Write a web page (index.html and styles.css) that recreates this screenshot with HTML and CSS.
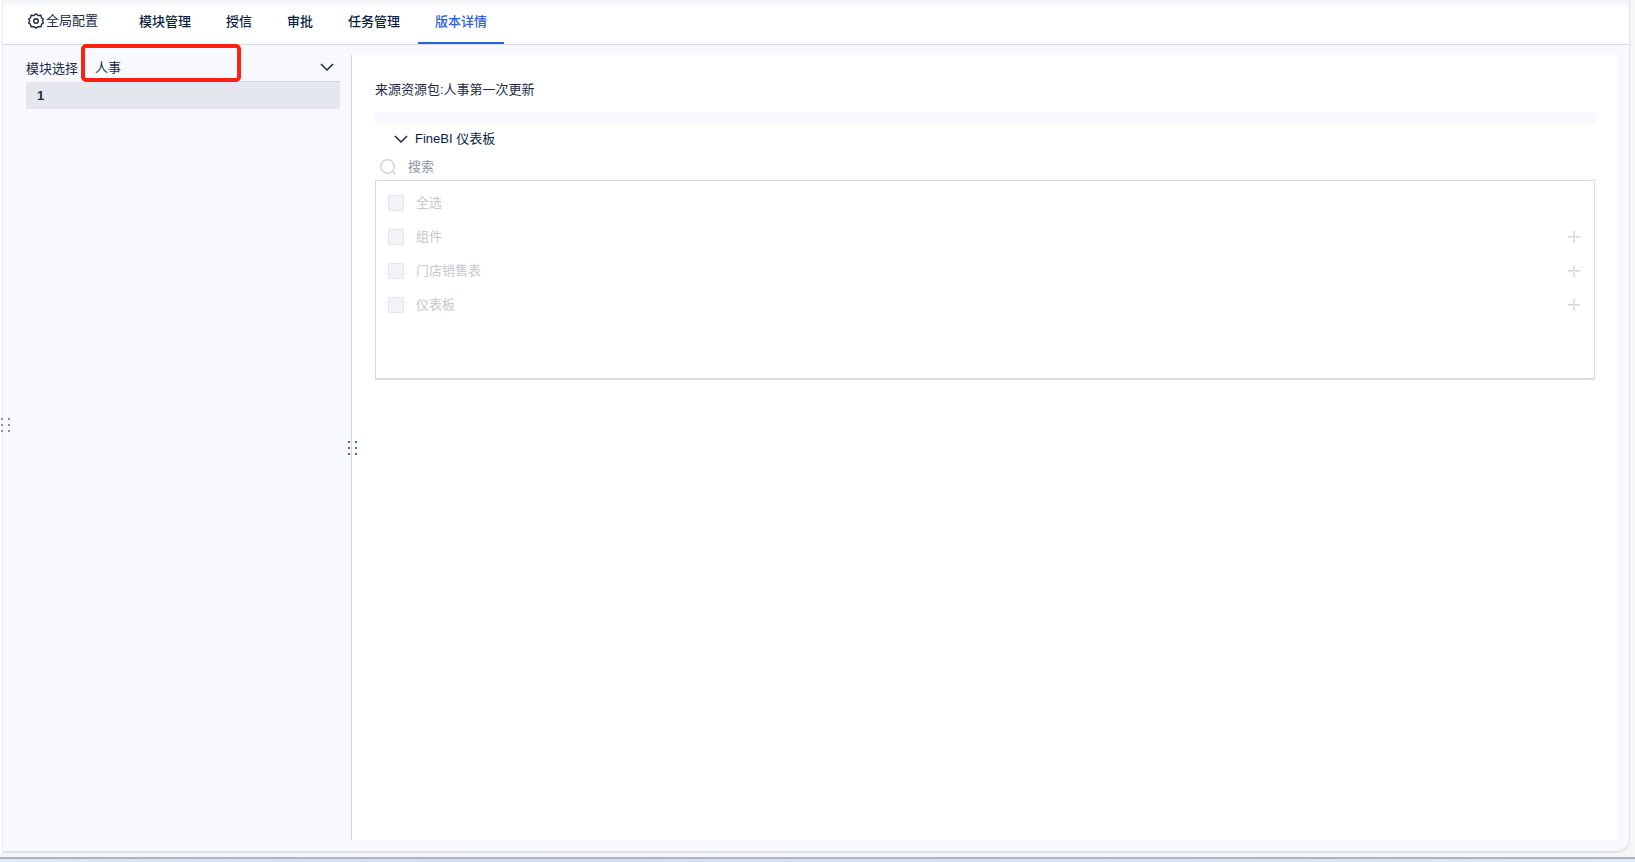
FILE: index.html
```html
<!DOCTYPE html>
<html lang="zh-CN">
<head>
<meta charset="utf-8">
<meta name="viewport" content="width=device-width, initial-scale=1">
<title>版本详情</title>
<link rel="stylesheet" href="styles.css">
</head>
<body>
<div class="window">
  <header class="topbar">
    <button class="config" type="button">
      <svg class="gear" viewBox="0 0 16 16" aria-hidden="true"><path d="M6 2.600L8 .8l2 1.800 2.900-.3.700 2.700 1.800 1-1 2 1 2-1.800 1.200-.7 2.600-2.900-.2L8 15.300l-2-1.700-2.900.2-.7-2.600L.6 10l1-2-1-2 1.800-1 .7-2.700z"/><circle cx="8" cy="8" r="2.300"/></svg>
      <span>全局配置</span>
    </button>
    <nav class="tabs" role="tablist">
      <button class="tab" type="button" role="tab">模块管理</button>
      <button class="tab" type="button" role="tab">授信</button>
      <button class="tab" type="button" role="tab">审批</button>
      <button class="tab" type="button" role="tab">任务管理</button>
      <button class="tab tab-active" type="button" role="tab" aria-selected="true">版本详情</button>
    </nav>
  </header>

  <div class="body">
    <aside class="side">
      <div class="picker">
        <label for="module">模块选择</label>
        <div class="select-wrap">
          <select id="module" class="select"><option>人事</option></select>
          <svg class="chevron select-arrow" viewBox="0 0 14 8" aria-hidden="true"><path d="M1 1l6 6 6-6"/></svg>
          <span class="highlight"></span>
        </div>
      </div>
      <ul class="versions"><li class="version">1</li></ul>
    </aside>

    <main class="detail">
      <span class="grip grip-inner" aria-hidden="true"><i></i><i></i><i></i><i></i><i></i><i></i></span>
      <p class="source">来源资源包:人事第一次更新</p>
      <div class="band"></div>
      <button class="section" type="button" aria-expanded="true">
        <svg class="chevron" viewBox="0 0 14 8" aria-hidden="true"><path d="M1 1l6 6 6-6"/></svg>
        <span>FineBI 仪表板</span>
      </button>
      <div class="search">
        <svg class="lens" viewBox="0 0 16 16" aria-hidden="true"><circle cx="7.500" cy="7.500" r="6.700"/><path d="M12.300 12.300l3.200 3.200"/></svg>
        <input class="search-input" type="text" placeholder="搜索" aria-label="搜索">
      </div>
      <div class="list">
        <div class="row"><label class="item"><input class="check" type="checkbox" disabled>全选</label></div>
        <div class="row"><label class="item"><input class="check" type="checkbox" disabled>组件</label><button class="add" type="button" disabled aria-label="展开组件"></button></div>
        <div class="row"><label class="item"><input class="check" type="checkbox" disabled>门店销售表</label><button class="add" type="button" disabled aria-label="展开门店销售表"></button></div>
        <div class="row"><label class="item"><input class="check" type="checkbox" disabled>仪表板</label><button class="add" type="button" disabled aria-label="展开仪表板"></button></div>
      </div>
    </main>
  </div>
  <span class="grip grip-outer" aria-hidden="true"><i></i><i></i><i></i><i></i><i></i><i></i></span>
</div>
<div class="taskbar"></div>
</body>
</html>
```

FILE: styles.css
```css
* {
  box-sizing: border-box;
}

body {
  margin: 0;
  height: 100vh;
  display: flex;
  flex-direction: column;
  overflow: hidden;
  background: #f6f6f6;
  color: #1a2b43;
  font: 13px/20px "Liberation Sans", "Noto Sans CJK SC", sans-serif;
}

button,
input,
select {
  margin: 0;
  padding: 0;
  border: 0;
  background: none;
  color: inherit;
  font: inherit;
}

.window {
  position: relative;
  flex: 1;
  min-height: 0;
  display: flex;
  flex-direction: column;
  margin: 0 5px 4px 2px;
  border: 1px solid #e8eaef;
  border-top: 0;
  border-right-color: #dfe2e6;
  border-bottom: 2px solid #e0e1e3;
  border-bottom-right-radius: 14px;
  background: #f7f9fe;
  box-shadow: -3px 0 0 #fff;
}

.topbar {
  display: flex;
  height: 45px;
  padding-left: 25px;
  border-bottom: 1px solid #d8dbe5;
  background: linear-gradient(#f1f2f4, #fff 9px);
}

.config {
  display: flex;
  align-items: center;
  gap: 2px;
  padding-bottom: 2px;
}

.gear {
  width: 16px;
  height: 16px;
  fill: none;
  stroke: #1a2b43;
  stroke-width: 1.4;
  stroke-linejoin: round;
}

.tabs {
  display: flex;
  gap: 1px;
  margin-left: 24px;
}

.tab {
  padding: 1px 17px 0;
  border-bottom: 2px solid transparent;
  color: #091e40;
  font-weight: 500;
}

.tab-active {
  border-bottom-color: #2c60db;
  color: #2c60db;
}

.body {
  flex: 1;
  min-height: 0;
  display: flex;
  padding: 10px 11px 11px 0;
}

.side {
  width: 348px;
  padding: 0 11px 0 23px;
}

.picker {
  display: flex;
  align-items: flex-end;
  height: 27px;
}

.picker label {
  padding-bottom: 3px;
}

.select-wrap {
  position: relative;
  flex: 1;
  margin-left: 7px;
  border-bottom: 1px solid #d2d7e1;
}

.select {
  display: block;
  width: 100%;
  height: 26px;
  padding: 0 30px 1px 10px;
  appearance: none;
}

.chevron {
  width: 14px;
  height: 8px;
  fill: none;
  stroke: #1a2b43;
  stroke-width: 1.5;
}

.select-arrow {
  position: absolute;
  top: 8px;
  right: 6px;
  pointer-events: none;
}

.highlight {
  position: absolute;
  top: -11px;
  left: -4px;
  width: 160px;
  height: 38px;
  border: 4px solid #ff2113;
  border-radius: 5px;
  pointer-events: none;
}

.versions {
  margin: 0;
  padding: 0;
  list-style: none;
}

.version {
  padding: 4px 11px 3px;
  background: #e5e7ef;
  font-weight: 700;
}

.detail {
  position: relative;
  flex: 1;
  padding: 25px 23px;
  border-left: 1px solid #d3d6dd;
  background: #fff;
}

.source {
  margin: 0;
}

.band {
  height: 11px;
  margin-top: 12px;
  background: #f7f9fe;
}

.section {
  display: flex;
  align-items: center;
  gap: 7px;
  height: 31px;
  padding-left: 19px;
  color: #091e40;
}

.search {
  display: flex;
  align-items: center;
  gap: 12px;
  height: 26px;
  padding-left: 5px;
}

.lens {
  width: 16px;
  height: 16px;
  fill: none;
  stroke: #d0d5de;
  stroke-width: 1.6;
}

.search-input {
  flex: 1;
  min-width: 0;
}

.search-input::placeholder {
  color: #8d97a6;
  opacity: 1;
}

.list {
  min-height: 200px;
  padding: 5px 14px 6px 12px;
  border: 1px solid #d9dbe4;
  border-bottom-width: 2px;
}

.row {
  display: flex;
  align-items: center;
  justify-content: space-between;
  height: 34px;
}

.item {
  display: flex;
  align-items: center;
  gap: 12px;
  color: #c3c8cf;
}

.check {
  width: 16px;
  height: 16px;
  appearance: none;
  border: 1px solid #e0e2ec;
  border-radius: 2px;
  background: #f2f3f8;
}

.add {
  width: 12px;
  height: 12px;
  background:
    linear-gradient(#d3d5dc 50%, #e9eaee 50%) center / 12px 2px no-repeat,
    linear-gradient(#dfe2ea, #dfe2ea) center / 2px 12px no-repeat;
}

.grip {
  position: absolute;
  display: grid;
  grid-template-columns: 2px 2px;
  gap: 4px 5px;
}

.grip i {
  height: 2px;
  background: #57688a;
}

.grip-inner {
  top: 386px;
  left: -4px;
}

.grip-outer {
  top: 418px;
  left: -2px;
}

.grip-outer i {
  background: #8792a9;
}

.taskbar {
  height: 5px;
  border-top: 2px solid #aab5c1;
  background: linear-gradient(90deg, #dae8f7, #d3def7 30%, #dae8f7);
}
```
